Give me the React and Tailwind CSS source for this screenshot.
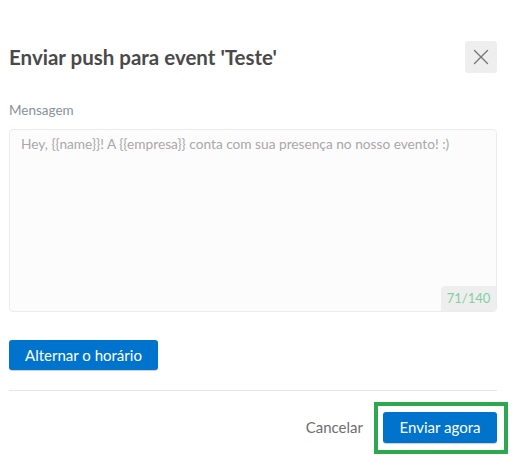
import React from "react";

export default function App() {
    return (
        <div className="w-[530px] h-[473px] bg-white font-['Lato','Liberation_Sans',sans-serif] overflow-hidden">
            <div className="w-[497px] pl-[9px] pt-[41px]">
                {/* Header */}
                <div className="flex items-center justify-between h-[32px]">
                    <h1 className="text-[20.5px] font-bold text-[#4a4a4a]">Enviar push para event 'Teste'</h1>
                    <button className="w-[32px] h-[32px] rounded-[3px] bg-[#eeeeee] flex items-center justify-center text-[#777777]">
                        <svg width="16" height="16" viewBox="0 0 16 16" fill="none" stroke="currentColor" strokeWidth="1.4" strokeLinecap="round">
                            <path d="M1.5 1.5L14.5 14.5M14.5 1.5L1.5 14.5" />
                        </svg>
                    </button>
                </div>

                {/* Message */}
                <div className="mt-[29px] text-[13.5px] text-[#8a9199] leading-[17px]">Mensagem</div>
                <div className="relative mt-[10px] h-[183px] rounded-[4px] border border-[#ececec] bg-[#fcfcfc]">
                    <p className="px-[11px] pt-[5px] text-[13.7px] text-[#a8a8a8] leading-[18px]">
                        Hey, {"{{name}}"}! A {"{{empresa}}"} conta com sua presença no nosso evento! :)
                    </p>
                    <div className="absolute right-0 bottom-0 w-[55px] h-[25px] rounded-br-[4px] rounded-tl-[4px] bg-[#eeeeee] flex items-center justify-center text-[13px] text-[#7fd1a2]">
                        71/140
                    </div>
                </div>

                {/* Schedule */}
                <button className="mt-[28px] h-[30px] w-[149px] rounded-[3px] bg-[#0073cc] text-white text-[15px] shadow-[0_1px_1px_rgba(0,0,0,0.2)]">
                    Alternar o horário
                </button>

                <div className="mt-[20px] h-px bg-[#e6e6e6]"></div>

                {/* Footer */}
                <div className="mt-[21px] flex items-center justify-end gap-[20px]">
                    <button className="text-[15px] text-[#6e6e6e]">Cancelar</button>
                    <div className="relative">
                        <button className="h-[31px] w-[114px] rounded-[3px] bg-[#0073cc] text-white text-[15px] shadow-[0_1px_1px_rgba(0,0,0,0.2)]">
                            Enviar agora
                        </button>
                        <div className="absolute -left-[9px] -right-[11px] -top-[10px] -bottom-[11px] border-[4px] border-[#2ea84f] pointer-events-none"></div>
                    </div>
                </div>
            </div>
        </div>
    );
}
